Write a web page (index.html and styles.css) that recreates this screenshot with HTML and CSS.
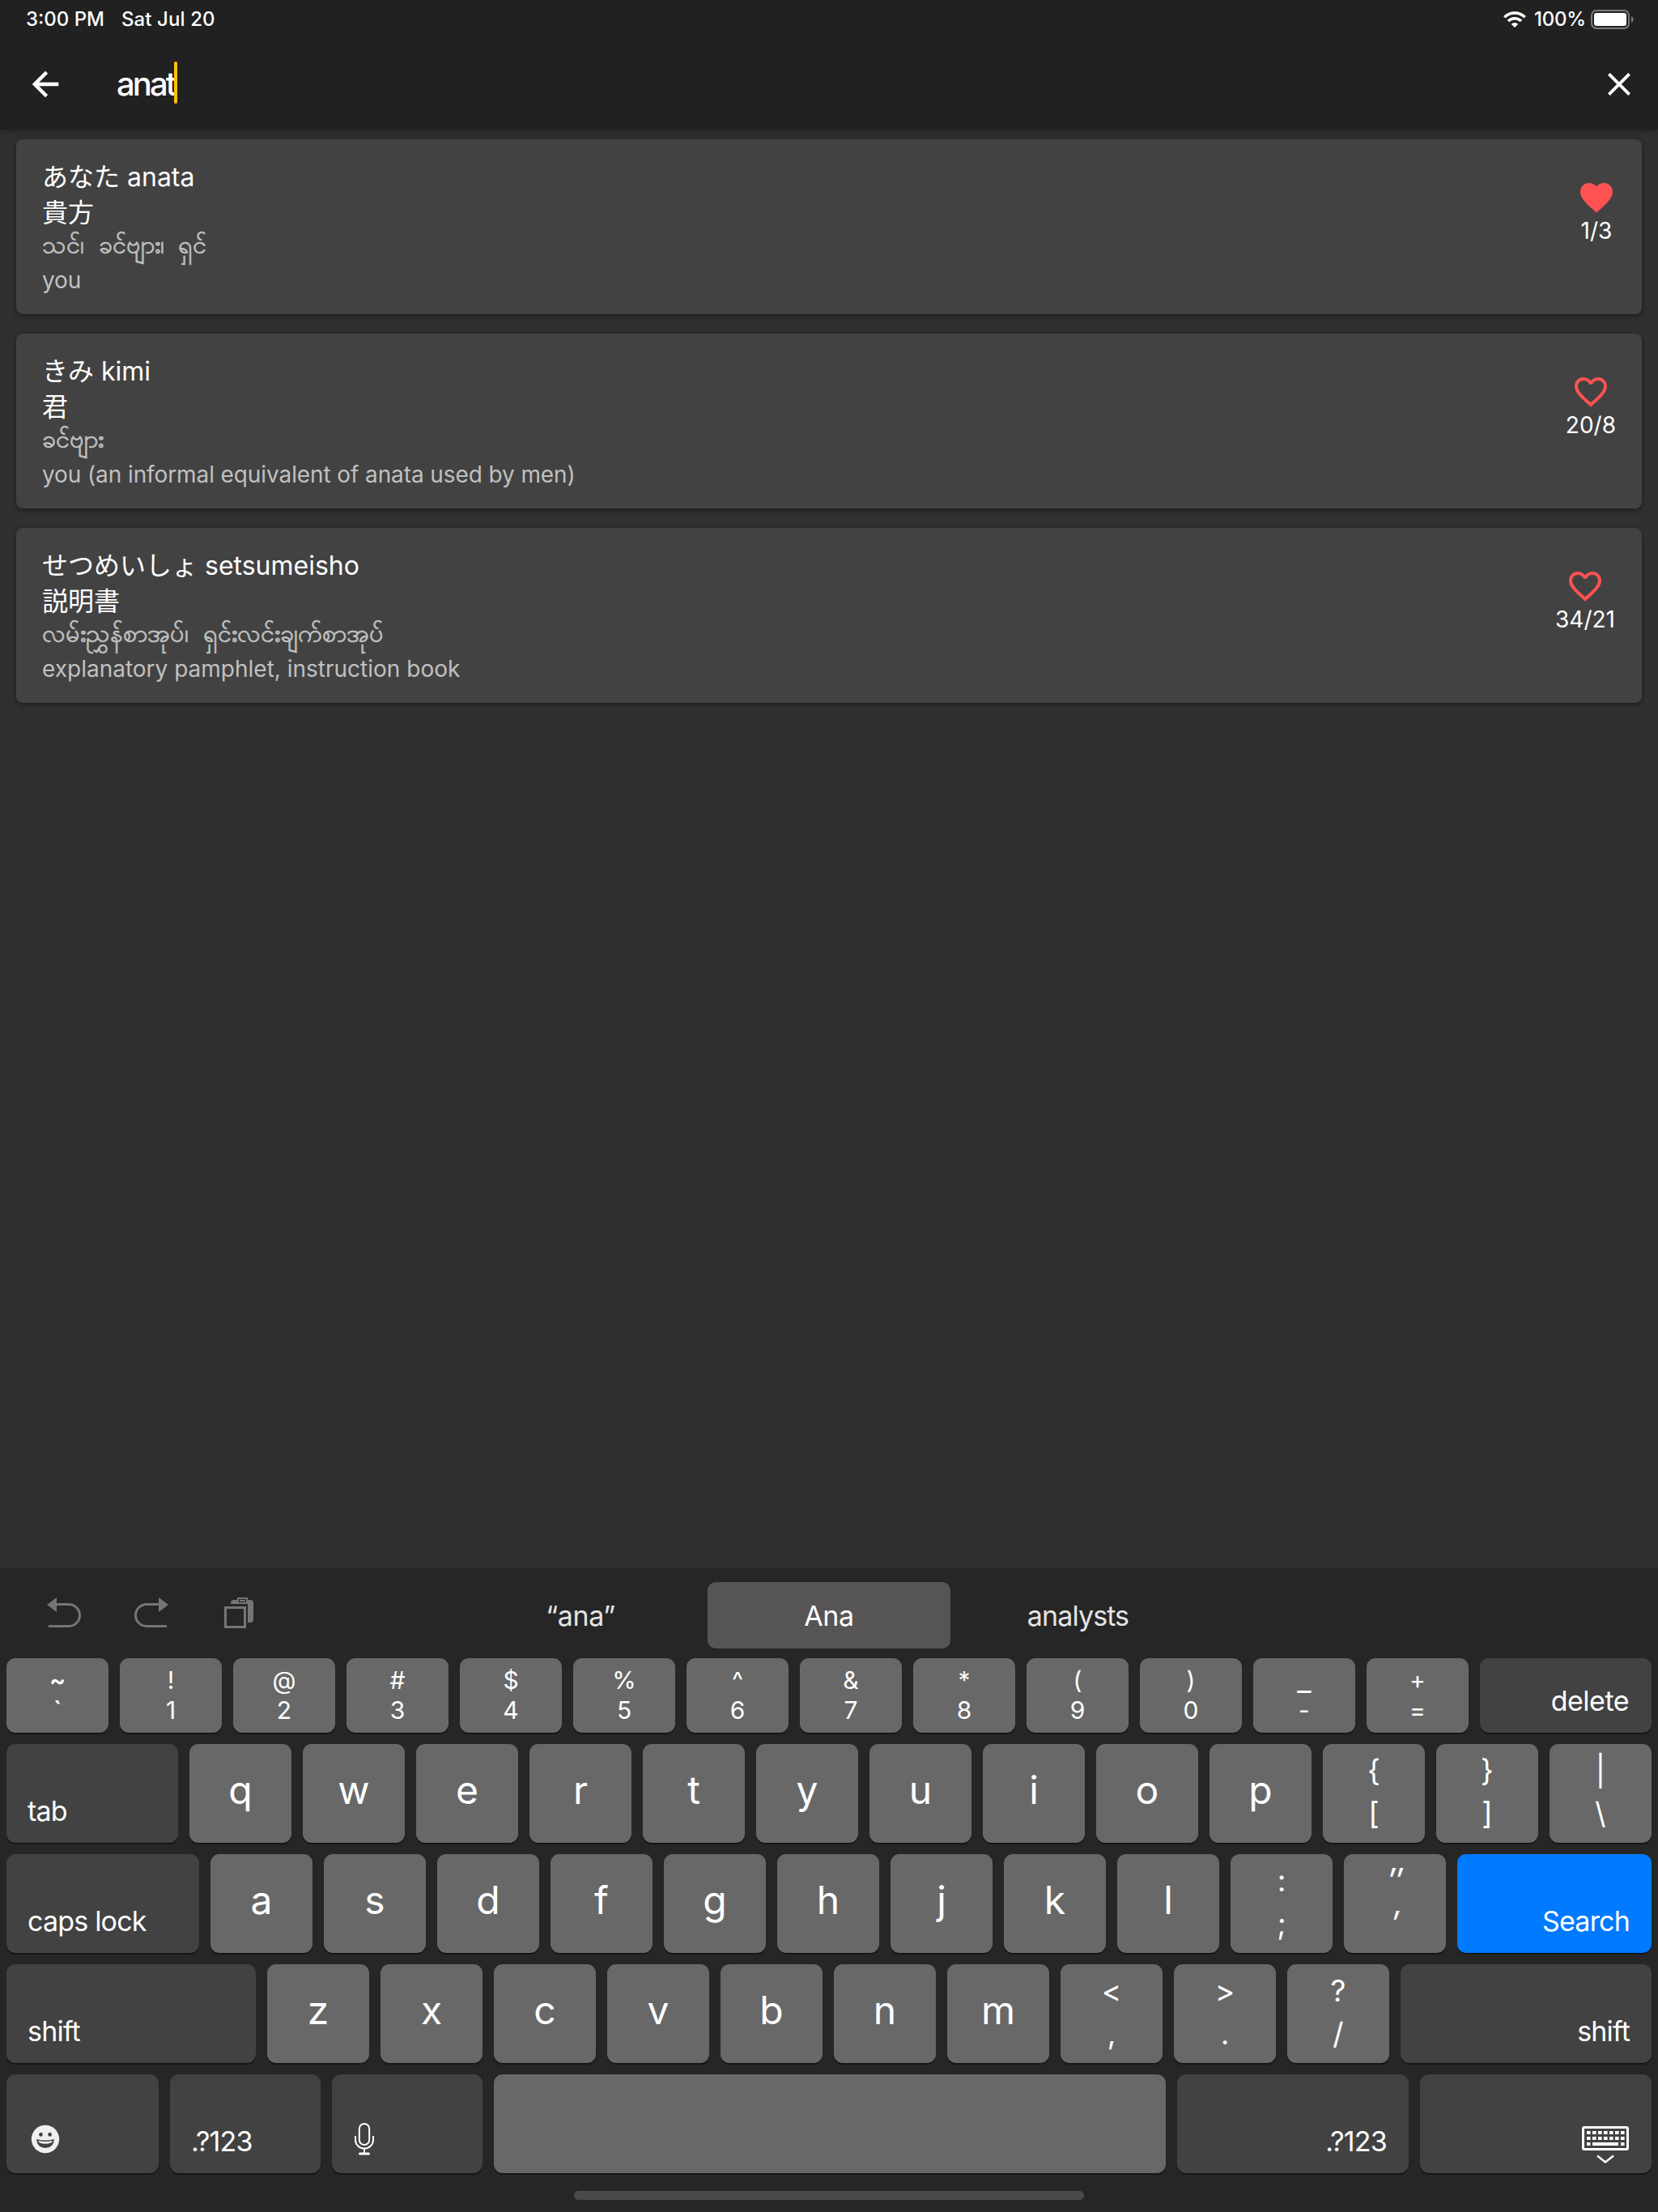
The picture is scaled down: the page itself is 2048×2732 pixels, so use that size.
FILE: index.html
```html
<!DOCTYPE html>
<html lang="en">
<head>
<meta charset="utf-8">
<title>Dictionary search</title>
<link rel="stylesheet" href="styles.css">
</head>
<body>
<div class="screen">
  <header class="top">
    <div class="status">
      <span class="clock">3:00 PM</span><span class="date">Sat Jul 20</span>
      <svg class="wifi" width="28" height="20" viewBox="0 0 28 20"><g fill="none" stroke="#fff" stroke-width="3.6"><path d="M1.3 7.2a18 18 0 0 1 25.4 0"/><path d="M6 12a11.300 11.300 0 0 1 16 0"/></g><path d="M14 20l-4.300-4.300a6.100 6.100 0 0 1 8.600 0z" fill="#fff"/></svg>
      <span class="percent">100%</span>
      <svg class="battery" width="54" height="24" viewBox="0 0 54 24"><rect x="1" y="1" width="46" height="22" rx="6" fill="none" stroke="#7a7a7a" stroke-width="2"/><rect x="4" y="4" width="40" height="16" rx="3" fill="#fff"/><path d="M50 8c3.500 1.500 3.500 6.500 0 8z" fill="#7a7a7a"/></svg>
    </div>
    <div class="search">
      <svg class="back" width="48" height="48" viewBox="0 0 24 24"><path d="M20 11H7.830l5.590-5.590L12 4l-8 8 8 8 1.410-1.410L7.830 13H20v-2z" fill="#fff" stroke="#fff" stroke-width=".3"/></svg>
      <span class="query">anat</span><span class="caret"></span>
      <svg class="close" width="48" height="48" viewBox="0 0 24 24"><path d="M19 6.410L17.590 5 12 10.590 6.410 5 5 6.410 10.590 12 5 17.590 6.410 19 12 13.410 17.590 19 19 17.590 13.410 12z" fill="#fff"/></svg>
    </div>
  </header>
  <main class="results">
    <article class="card">
      <div class="entry"><p class="kana">あなた anata</p><p class="kanji">貴方</p><p class="burmese">သင်၊ ခင်ဗျား၊ ရှင်</p><p class="english">you</p></div>
      <div class="fav"><svg width="48" height="48" viewBox="0 0 24 24"><path d="M12 21.350l-1.450-1.320C5.400 15.360 2 12.280 2 8.500 2 5.420 4.420 3 7.500 3c1.740 0 3.410.810 4.500 2.090C13.090 3.810 14.760 3 16.500 3 19.580 3 22 5.420 22 8.500c0 3.780-3.400 6.860-8.550 11.540L12 21.350z" fill="#ff5252"/></svg><span>1/3</span></div>
    </article>
    <article class="card">
      <div class="entry"><p class="kana">きみ kimi</p><p class="kanji">君</p><p class="burmese">ခင်ဗျား</p><p class="english">you (an informal equivalent of anata used by men)</p></div>
      <div class="fav"><svg width="48" height="48" viewBox="0 0 24 24"><path d="M16.500 3c-1.740 0-3.410.810-4.500 2.090C10.910 3.810 9.240 3 7.500 3 4.420 3 2 5.420 2 8.500c0 3.780 3.400 6.860 8.550 11.540L12 21.350l1.450-1.320C18.600 15.360 22 12.280 22 8.500 22 5.420 19.580 3 16.500 3zm-4.400 15.550l-.1.100-.1-.1C7.140 14.240 4 11.390 4 8.500 4 6.500 5.500 5 7.500 5c1.540 0 3.040.990 3.570 2.360h1.870C13.460 5.990 14.960 5 16.500 5c2 0 3.500 1.500 3.500 3.500 0 2.890-3.140 5.740-7.900 10.050z" fill="#ff5252"/></svg><span>20/8</span></div>
    </article>
    <article class="card">
      <div class="entry"><p class="kana">せつめいしょ setsumeisho</p><p class="kanji">説明書</p><p class="burmese">လမ်းညွှန်စာအုပ်၊ ရှင်းလင်းချက်စာအုပ်</p><p class="english last">explanatory pamphlet, instruction book</p></div>
      <div class="fav fav-wide"><svg width="48" height="48" viewBox="0 0 24 24"><path d="M16.500 3c-1.740 0-3.410.810-4.500 2.090C10.910 3.810 9.240 3 7.500 3 4.420 3 2 5.420 2 8.500c0 3.780 3.400 6.860 8.550 11.540L12 21.350l1.450-1.320C18.600 15.360 22 12.280 22 8.500 22 5.420 19.580 3 16.500 3zm-4.400 15.550l-.1.100-.1-.1C7.140 14.240 4 11.390 4 8.500 4 6.500 5.500 5 7.500 5c1.540 0 3.040.990 3.570 2.360h1.870C13.460 5.990 14.960 5 16.500 5c2 0 3.500 1.500 3.500 3.500 0 2.890-3.140 5.740-7.900 10.050z" fill="#ff5252"/></svg><span>34/21</span></div>
    </article>
  </main>
  <section class="keyboard">
    <div class="assist">
      <div class="tools">
        <svg width="42" height="38" viewBox="0 0 42 38"><path d="M0 9L12 0v18z" fill="#757575"/><path d="M10 8.500h17a13.500 13.500 0 0 1 0 27H3" fill="none" stroke="#757575" stroke-width="3" stroke-linecap="round"/></svg>
        <svg width="42" height="38" viewBox="0 0 42 38"><path d="M42 9L30 0v18z" fill="#757575"/><path d="M32 8.500H15a13.500 13.500 0 0 0 0 27h24" fill="none" stroke="#757575" stroke-width="3" stroke-linecap="round"/></svg>
        <svg class="paste" width="38" height="38" viewBox="0 0 38 38"><path d="M8 8V7q0-4 4-4h4V0h13v3h3q4 0 4 4v20q0 4-4 4h-3V8z" fill="#757575"/><path d="M18.500 2.500h8v3h-8z" fill="#757575" stroke="#262626" stroke-width="1.200"/><path d="M1.500 12.500h24v24h-24z" fill="none" stroke="#757575" stroke-width="3"/></svg>
      </div>
      <div class="suggest s1">“ana”</div><div class="suggest active">Ana</div><div class="suggest s3">analysts</div>
    </div>
    <div class="row nums">
      <div class="key"><b class="strong">~</b><b class="strong">`</b></div><div class="key"><b>!</b><b>1</b></div><div class="key"><b>@</b><b>2</b></div><div class="key"><b>#</b><b>3</b></div><div class="key"><b>$</b><b>4</b></div><div class="key"><b>%</b><b>5</b></div><div class="key"><b>^</b><b>6</b></div><div class="key"><b>&amp;</b><b>7</b></div><div class="key"><b>*</b><b>8</b></div><div class="key"><b>(</b><b>9</b></div><div class="key"><b>)</b><b>0</b></div><div class="key"><b class="under">_</b><b>-</b></div><div class="key"><b>+</b><b>=</b></div><div class="key mod right grow">delete</div>
    </div>
    <div class="row">
      <div class="key mod grow">tab</div><div class="key">q</div><div class="key">w</div><div class="key">e</div><div class="key">r</div><div class="key">t</div><div class="key">y</div><div class="key">u</div><div class="key">i</div><div class="key">o</div><div class="key">p</div><div class="key two"><b>{</b><b>[</b></div><div class="key two"><b>}</b><b>]</b></div><div class="key two"><b>|</b><b>\</b></div>
    </div>
    <div class="row">
      <div class="key mod caps">caps lock</div><div class="key">a</div><div class="key">s</div><div class="key">d</div><div class="key">f</div><div class="key">g</div><div class="key">h</div><div class="key">j</div><div class="key">k</div><div class="key">l</div><div class="key two"><b>:</b><b>;</b></div><div class="key two"><b class="tick">″</b><b class="tick">′</b></div><div class="key mod go right grow">Search</div>
    </div>
    <div class="row">
      <div class="key mod shift">shift</div><div class="key">z</div><div class="key">x</div><div class="key">c</div><div class="key">v</div><div class="key">b</div><div class="key">n</div><div class="key">m</div><div class="key two"><b>&lt;</b><b>,</b></div><div class="key two"><b>&gt;</b><b>.</b></div><div class="key two"><b>?</b><b>/</b></div><div class="key mod right grow">shift</div>
    </div>
    <div class="row">
      <div class="key mod emoji"><svg width="36" height="36" viewBox="0 0 36 36"><circle cx="18" cy="18" r="17.200" fill="#f0f0f0"/><ellipse cx="12.400" cy="12.300" rx="2.300" ry="2.500" fill="#424242"/><ellipse cx="23.600" cy="12.300" rx="2.300" ry="2.500" fill="#424242"/><path d="M7 18q11 3 22 0-1 11-11 11T7 18z" fill="#424242"/><path d="M9 20q9 2 18 0-1 3.800-9 3.800T9 20z" fill="#f0f0f0"/></svg></div>
      <div class="key mod sym">.?123</div>
      <div class="key mod sym mic"><svg width="24" height="40" viewBox="0 0 24 40" fill="none" stroke="#fff" stroke-width="2"><rect x="5.800" y="1" width="12.400" height="26" rx="6.200"/><path d="M1 16v5a11 10.500 0 0 0 22 0v-5M12 31.500v6"/><path d="M6.500 38h11" stroke-width="3" stroke-linecap="round"/></svg></div>
      <div class="key space"></div>
      <div class="key mod right wide">.?123</div>
      <div class="key mod right wide hide"><svg width="58" height="48" viewBox="0 0 58 48"><rect x="1.500" y="2.500" width="55" height="27" rx="1.500" fill="none" stroke="#fff" stroke-width="3"/><path d="M6 9h48M6 16h48" fill="none" stroke="#fff" stroke-width="4" stroke-dasharray="4.600 2.400"/><path d="M6 23h4.500M13 23h32M48 23h4.500" stroke="#fff" stroke-width="4"/><path d="M19 37.500l10 8 10-8" fill="none" stroke="#fff" stroke-width="2.500"/></svg></div>
    </div>
    <div class="home"></div>
  </section>
</div>
</body>
</html>
```
FILE: styles.css
```css
* { box-sizing: border-box; }
body { margin: 0; background: #303030; color: #fff; font-family: Inter, "Noto Sans CJK JP", "Noto Sans", sans-serif; }
p { margin: 0; }
svg { display: block; flex: none; }
.screen { width: 2048px; height: 2732px; display: flex; flex-direction: column; overflow: hidden; }

.top { height: 160px; flex: none; background: #212121; box-shadow: 0 2px 8px rgba(0,0,0,.3); }
.status { height: 47px; display: flex; align-items: center; padding: 0 29px 0 32px; font-size: 24px; font-weight: 450; white-space: nowrap; }
.clock { width: 118px; }
.date { flex: 1; letter-spacing: .1px; }
.wifi { margin-right: 10px; }
.percent { width: 70px; letter-spacing: -.2px; }
.search { height: 113px; display: flex; align-items: center; padding: 0 24px 0 32px; }
.query { margin-left: 64px; font-size: 40px; font-weight: 500; letter-spacing: -2.900px; }
.caret { width: 4px; height: 52px; background: #ffc107; border-radius: 2px; margin: -4px auto 0 -1px; }

.results { flex: 1; display: flex; flex-direction: column; gap: 24px; padding: 12px 20px; }
.card { height: 216px; flex: none; display: flex; justify-content: space-between; background: #424242; border-radius: 8px; padding: 24px 32px; box-shadow: 0 2px 6px rgba(0,0,0,.45); }
.entry { white-space: nowrap; }
.kana, .kanji { height: 44px; line-height: 46px; font-size: 32px; }
.burmese { height: 42px; line-height: 36px; font-size: 30.4px; color: #c0c0c0; word-spacing: 9px; -webkit-text-stroke: .7px #c0c0c0; }
.english { height: 40px; line-height: 41px; font-size: 28px; letter-spacing: -.1px; color: #c0c0c0; }
.last { letter-spacing: 0; }
.fav { display: flex; flex-direction: column; align-items: center; padding-top: 24px; font-size: 28px; line-height: 34px; }
.fav-wide { padding-right: 1px; }

.keyboard { height: 796px; flex: none; background: #262626; padding: 18px 8px 0; display: flex; flex-direction: column; gap: 14px; }
.assist { height: 82px; flex: none; margin-bottom: -2px; display: grid; grid-template-columns: 558px 308px 300px 14px 300px; font-size: 34px; letter-spacing: -.4px; }
.tools { display: flex; gap: 66px; padding: 19px 0 0 50px; }
.paste { margin-left: 3px; }
.suggest { display: flex; align-items: center; justify-content: center; color: #e4e4e4; }
.s1 { padding-right: 6px; }
.active { background: #575455; border-radius: 10px; color: #fff; }
.s3 { grid-column: 5; letter-spacing: -.9px; padding-right: 13px; }
.row { height: 122px; flex: none; display: flex; gap: 14px; }
.nums { height: 92px; }
.key { width: 126px; flex: none; background: #686868; border-radius: 11px; box-shadow: 0 2px 0 #161616; display: flex; align-items: center; justify-content: center; font-size: 48px; padding-bottom: 10px; }
.key b { display: block; font-weight: 400; text-align: center; }
.nums .key { flex-direction: column; padding: 0; }
.nums b { font-size: 30px; line-height: 37px; height: 37px; }
.nums .strong { font-weight: 600; }
.nums .under { font-size: 38px; line-height: 34px; }
.two { flex-direction: column; padding: 0 0 4px; }
.two b { font-size: 37px; line-height: 53px; height: 53px; }
.two .tick { font-size: 42px; font-style: italic; }
.nums .mod, .mod { flex-direction: row; background: #424242; font-size: 34px; letter-spacing: -.8px; align-items: flex-end; justify-content: flex-start; padding: 0 26px 17px; line-height: 44px; }
.nums .right, .right { justify-content: flex-end; padding-right: 27px; }
.nums .right { letter-spacing: -.5px; padding-right: 28px; }
.grow { flex: 1; }
.caps { width: 238px; }
.shift { width: 308px; }
.go { background: #007aff; }
.emoji { width: 188px; padding: 0 30px 24px; }
.sym { width: 186px; }
.mic { padding: 0 28px 22px; }
.space { width: 830px; }
.wide { width: 286px; }
.hide { padding: 0 28px 11px; }
.home { width: 630px; height: 11px; border-radius: 6px; background: #4a4a4a; margin: 8px auto 0; }
```
